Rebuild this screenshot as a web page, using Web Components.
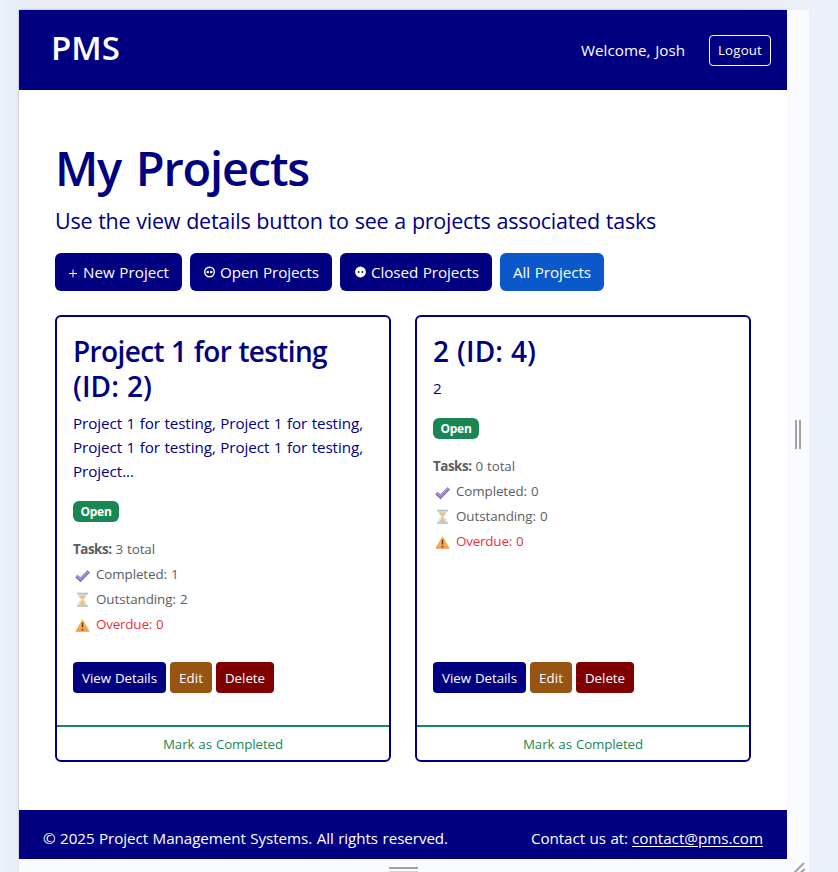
<!DOCTYPE html>
<html lang="en"><head><meta charset="utf-8"><title>PMS</title>
<style>
html,body{margin:0;height:100%;overflow:hidden}
body{background:#ecf0f9;font-family:"Open Sans","Noto Sans",sans-serif;word-spacing:.04em;color:navy}
</style></head><body>
<device-stage><pms-app></pms-app></device-stage>
<script>
const define=(name,html,setup)=>customElements.define(name,class extends HTMLElement{
  connectedCallback(){
    if(this.shadowRoot)return;
    const t=document.createElement('template');
    t.innerHTML=typeof html==='function'?html(this):html;
    this.attachShadow({mode:'open'}).append(t.content.cloneNode(true));
    if(setup)setup(this);
  }
});
/* One line of text, tracked to fill the width in px given by "w". */
define('tracked-text','<style>:host{display:inline-block;white-space:nowrap}</style><slot></slot>',el=>{
  const w=+el.getAttribute('w');
  const n=el.textContent.length;
  const r=document.createRange();
  r.selectNodeContents(el);
  const now=r.getBoundingClientRect().width;
  el.style.letterSpacing=((w-now)/n)+'px';
  el.style.width=w+'px';
});
define('device-stage',`<style>
:host{display:grid;box-sizing:border-box;width:838px;height:872px;padding:10px 29px 0 19px;grid-template:849px 13px/768px 22px;background:linear-gradient(90deg,#edf1fa,#e8ecf5 19px,#e8ecf5 740px,#ecf0f9 800px)}
.screen{box-shadow:0 0 2px rgba(0,0,0,.28);clip-path:inset(-3px 0 0 -3px)}
.right,.bottom,.corner{background:#f9fbff;display:flex}
.right{align-items:center;justify-content:center}
.bottom{justify-content:center;align-items:flex-start}
.corner{justify-content:flex-end;align-items:flex-end}
svg{display:block}
</style>
<div class="screen"><slot></slot></div>
<div class="right"><svg width="8" height="30" viewBox="0 0 8 30"><path d="M2 0v29M6 0v29" stroke="#a3a3a3" stroke-width="2"/></svg></div>
<div class="bottom"><svg width="30" height="13" viewBox="0 0 30 13"><path d="M1 9h29" stroke="#a3a3a3" stroke-width="2"/><path d="M1 12.5h29" stroke="#d0d1d4"/></svg></div>
<div class="corner"><svg width="18" height="10" viewBox="0 0 18 10"><path d="M3 11L13 1M9 11l5-4" stroke="#a3a3a3" stroke-width="2"/></svg></div>`);
define('pms-button',`<style>
:host{display:flex;box-sizing:border-box;height:38px;padding:0 13px;gap:5px;align-items:center;border-radius:6px;background:var(--bg,navy);color:#fff;font-size:15.2px;line-height:24px}
:host([small]){height:31px;padding:0 9px;border-radius:4px;font-size:13.3px}
:host([outline]){border:1px solid #fff;padding:0 8px}
</style><slot></slot>`);
define('pms-icon',el=>{
  const g={
  plus:'<svg width="10" height="16"><path d="M1 9.500h8M5 5.500v8" stroke="#fff"/></svg>',
  open:'<svg width="12" height="16"><circle cx="6.500" cy="8" r="4.8" fill="none" stroke="#fff" stroke-width="1.4"/><circle cx="4.800" cy="8" r="1.3" fill="#fff"/><circle cx="8.200" cy="8" r="1.3" fill="#fff"/></svg>',
  closed:'<svg width="13" height="16"><circle cx="7.500" cy="8" r="5.4" fill="#fff"/><circle cx="5.600" cy="8" r=".9" fill="navy"/><circle cx="9.400" cy="8" r=".9" fill="navy"/></svg>',
  check:'<svg width="19" height="18"><path d="M3.5 10.2l4 3.7 8.2-8.5" fill="none" stroke="#7d63ad" stroke-width="3.5"/><path d="M3.4 9.7l4.1 3.5 7.8-8" fill="none" stroke="#a78cd8" stroke-width="2.3"/></svg>',
  glass:'<svg width="19" height="18"><path d="M5 2.5h9c0 3-1 4.3-3.3 6 2.300 1.700 3.300 3 3.300 6H5c0-3 1-4.300 3.300-6C6 6.800 5 5.500 5 2.500z" fill="#d5e5ee"/><path d="M6.500 4.500h6c-.3 1.600-1.100 2.500-3 4-1.900-1.500-2.700-2.400-3-4zM9.500 8.500l2.900 5.500H6.600z" fill="#f2bf69"/><path d="M4 2.500h11M4 15h11" stroke="#a9bdc8" stroke-width="1.500"/></svg>',
  warn:'<svg width="19" height="18"><defs><linearGradient id="a" x2="0" y2="1"><stop stop-color="#fcc34f"/><stop offset="1" stop-color="#f99b4c"/></linearGradient></defs><path d="M9.500 3.500L16 15.300H3z" fill="url(#a)" stroke="url(#a)" stroke-linejoin="round"/><path d="M9.500 6.500v5M9.500 13v1.500" stroke="#4b4140" stroke-width="1.500"/></svg>'};
  return '<style>:host{display:block;flex:none}svg{display:block}</style>'+g[el.getAttribute('name')];
});
define('task-stats',el=>{
  const a=k=>el.getAttribute(k);
  return `<style>
:host{display:flex;flex-direction:column;font-size:13.4px;line-height:25px;color:#5a5d61}
div{display:flex;align-items:center;height:25px}
pms-icon{margin-right:4px}
.over{color:#dc3545}
b{font-weight:700}
.n{margin-left:4px}
</style>
<div><b><tracked-text w="38.5">Tasks:</tracked-text></b><span class="n"><tracked-text w="39.5">${a('total')} total</tracked-text></span></div>
<div><pms-icon name="check"></pms-icon><tracked-text w="82.5">Completed: ${a('done')}</tracked-text></div>
<div><pms-icon name="glass"></pms-icon><tracked-text w="91.5">Outstanding: ${a('left')}</tracked-text></div>
<div class="over"><pms-icon name="warn"></pms-icon><tracked-text w="67.5">Overdue: 0</tracked-text></div>`});
define('project-card',`<style>
:host{display:flex;flex-direction:column;box-sizing:border-box;width:336px;height:447px;border:2px solid navy;border-radius:6px;background:#fff}
.body{flex:1;display:flex;flex-direction:column;padding:17px 16px 0;align-items:flex-start}
.title,.desc{display:flex;flex-direction:column;align-items:flex-start}
.title{font-size:28px;line-height:35px;font-weight:560}
.desc{font-size:15.2px;line-height:24px;margin-top:7px}
.badge{margin:18px 0 15px;height:21px;width:46px;border-radius:6px;background:#198754;color:#fff;font-size:12px;font-weight:700;line-height:22.500px;text-align:center}
.actions{display:flex;gap:4px;margin-top:auto;margin-bottom:32px}
.mark{height:33px;border-top:2px solid #198754;color:#198754;font-size:13.300px;line-height:35px;text-align:center}
</style>
<div class="body"><div class="title"><slot name="title"></slot></div><div class="desc"><slot name="desc"></slot></div>
<div class="badge"><tracked-text w="31">Open</tracked-text></div>
<slot name="stats"></slot>
<div class="actions"><pms-button small><tracked-text w="75">View Details</tracked-text></pms-button><pms-button small style="--bg:#985412"><tracked-text w="24">Edit</tracked-text></pms-button><pms-button small style="--bg:maroon"><tracked-text w="40">Delete</tracked-text></pms-button></div></div>
<div class="mark"><tracked-text w="120">Mark as Completed</tracked-text></div>`);
define('pms-header',`<style>
:host{display:flex;box-sizing:border-box;height:80px;background:navy;color:#fff;padding:0 16px 0 32px;align-items:center;font-size:15.200px}
.brand{font-size:33px;font-weight:600;line-height:40px;margin-right:auto;padding-bottom:4px}
.hi{margin-right:24px}
</style><div class="brand"><tracked-text w="69">PMS</tracked-text></div><div class="hi"><tracked-text w="104">Welcome, Josh</tracked-text></div><pms-button small outline><tracked-text w="44">Logout</tracked-text></pms-button>`);
define('pms-footer',`<style>
:host{display:flex;box-sizing:border-box;height:49px;background:navy;color:#fff;padding:16px 24px 0;justify-content:space-between;font-size:15.200px;line-height:24px}
a{color:#fff;text-decoration:underline;text-underline-offset:2px}
tracked-text{text-decoration:inherit}
.c{display:flex;gap:4px}
</style><tracked-text w="405">© 2025 Project Management Systems. All rights reserved.</tracked-text><div class="c"><tracked-text w="97">Contact us at:</tracked-text><a><tracked-text w="131">contact@pms.com</tracked-text></a></div>`);
define('pms-app',`<style>
:host{display:flex;flex-direction:column;height:849px;background:#fff}
main{flex:1;box-sizing:border-box;padding:49px 36px 0;display:flex;flex-direction:column}
h1{margin:0;font-size:47px;font-weight:560;line-height:58px;word-spacing:.08em}
.lead{font-size:21.500px;font-weight:400;line-height:30px;margin-top:9px}
.bar{display:flex;gap:8px;margin-top:17px}
.cards{display:grid;grid-template-columns:336px 336px;gap:24px;margin-top:24px}
</style>
<pms-header></pms-header>
<main><h1><tracked-text w="254">My Projects</tracked-text></h1>
<div class="lead"><tracked-text w="601">Use the view details button to see a projects associated tasks</tracked-text></div>
<div class="bar"><pms-button><pms-icon name="plus"></pms-icon><tracked-text w="86">New Project</tracked-text></pms-button><pms-button><pms-icon name="open"></pms-icon><tracked-text w="99">Open Projects</tracked-text></pms-button><pms-button><pms-icon name="closed"></pms-icon><tracked-text w="108">Closed Projects</tracked-text></pms-button><pms-button style="--bg:#0a58ca"><tracked-text w="78">All Projects</tracked-text></pms-button></div>
<div class="cards">
<project-card><tracked-text slot="title" w="254">Project 1 for testing</tracked-text><tracked-text slot="title" w="79">(ID: 2)</tracked-text>
<tracked-text slot="desc" w="290">Project 1 for testing, Project 1 for testing,</tracked-text><tracked-text slot="desc" w="290">Project 1 for testing, Project 1 for testing,</tracked-text><tracked-text slot="desc" w="61">Project...</tracked-text>
<task-stats slot="stats" total="3" done="1" left="2"></task-stats></project-card>
<project-card><tracked-text slot="title" w="103">2 (ID: 4)</tracked-text><tracked-text slot="desc" w="9">2</tracked-text><task-stats slot="stats" total="0" done="0" left="0"></task-stats></project-card>
</div></main>
<pms-footer></pms-footer>`);
</script></body></html>
